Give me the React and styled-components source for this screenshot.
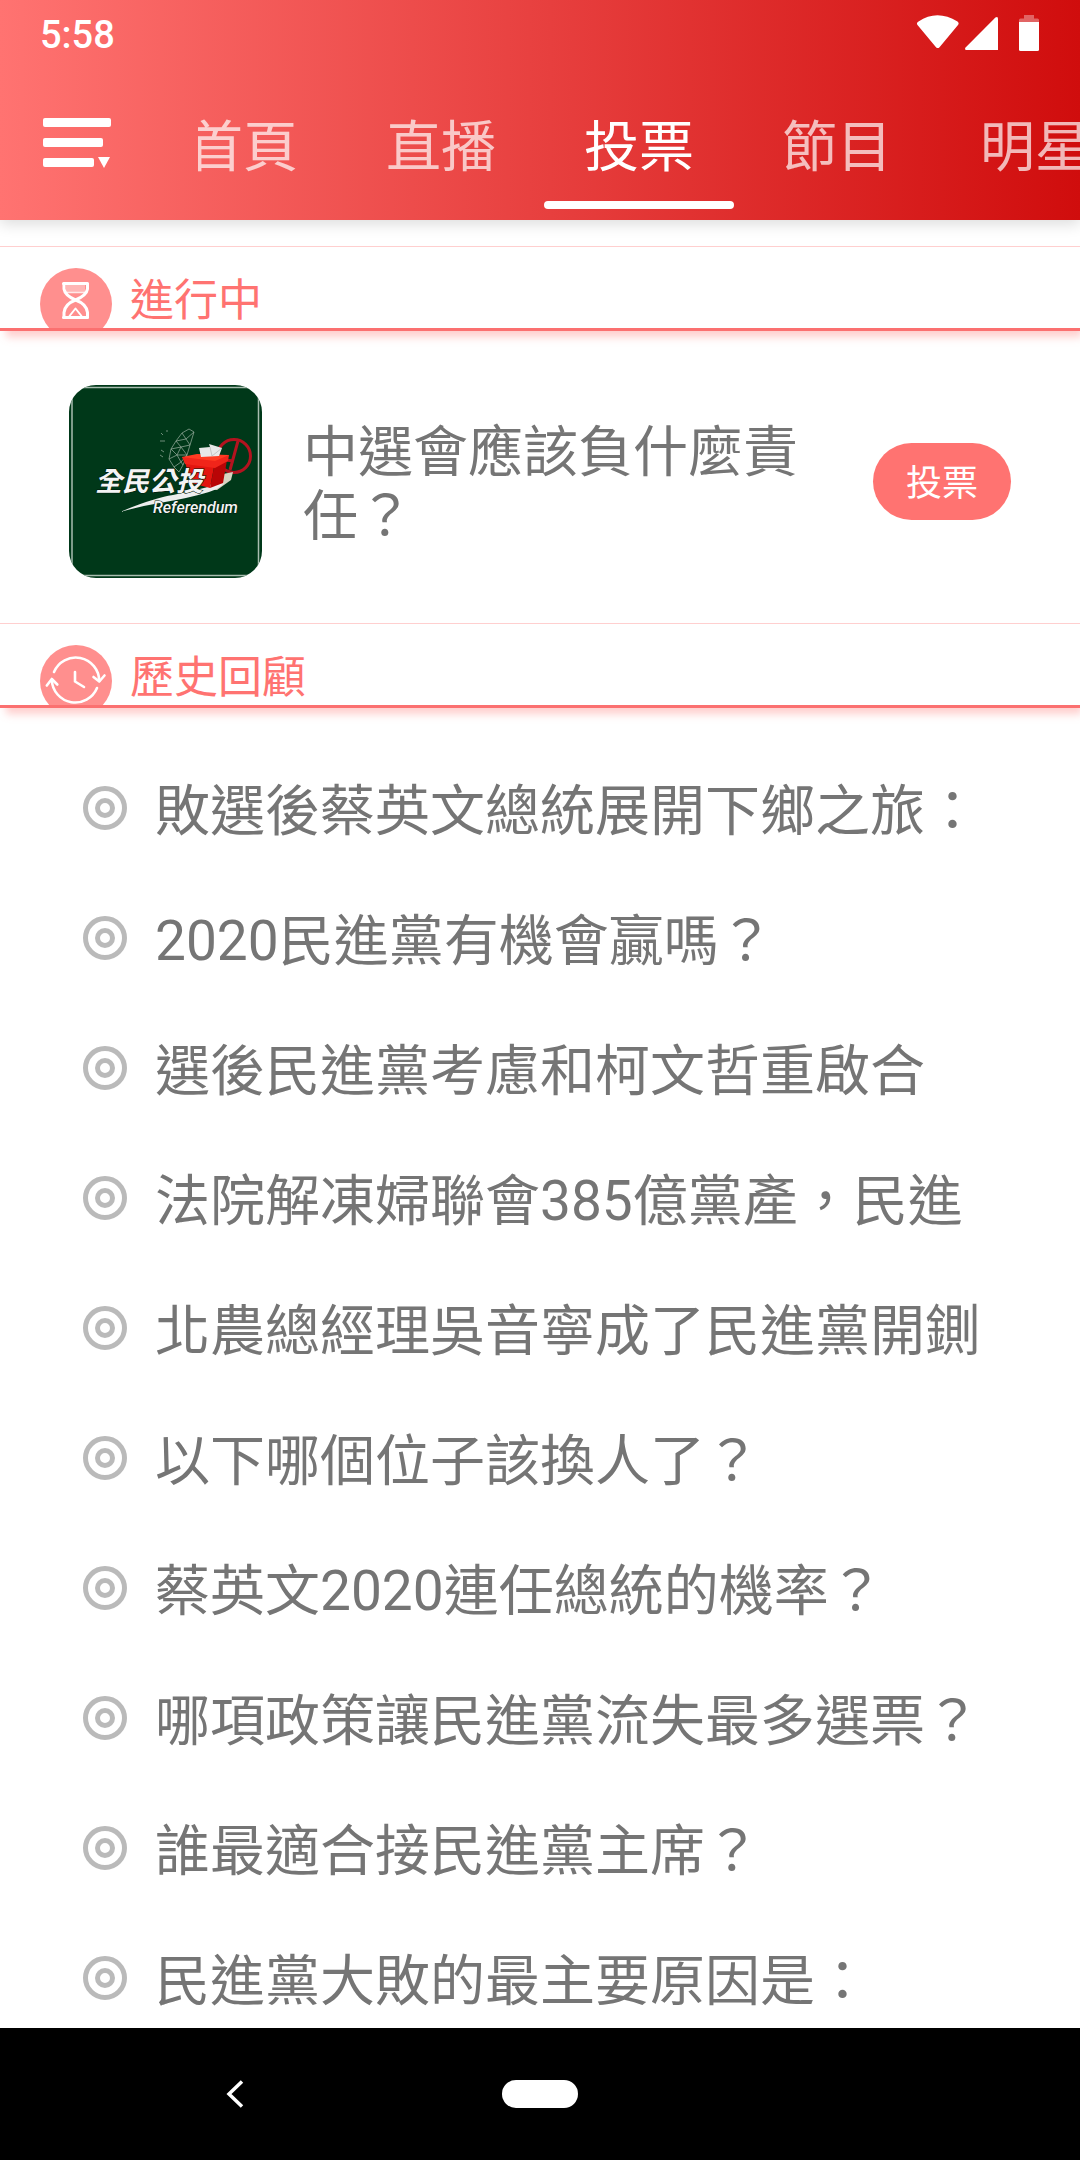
import { useState } from 'react'
import styled, { createGlobalStyle } from 'styled-components'

const GlobalStyle = createGlobalStyle`
  *, *::after {
    box-sizing: border-box;
  }
  body {
    margin: 0;
    background-color: white;
    font-family: Roboto, "Noto Sans CJK TC", sans-serif;
  }
`

const StPage = styled.div`
  display: flex;
  flex-direction: column;
  height: 100vh;
  overflow: hidden;
`

const StHeader = styled.header`
  flex: none;
  position: relative;
  background: linear-gradient(to right, #ff7371, #d00d0d);
  box-shadow: 0 4px 14px rgba(0, 0, 0, 0.14);
`

const StStatusBar = styled.div`
  display: flex;
  align-items: center;
  justify-content: space-between;
  height: 66px;
  padding: 0 41px 0 40px;
`

const StClock = styled.span`
  padding-top: 3px;
  color: white;
  font-size: 38px;
  font-weight: 500;
`

const StToolbar = styled.div`
  display: flex;
  height: 154px;
`

const StMenuButton = styled.button`
  flex: none;
  display: flex;
  align-items: center;
  width: 198px;
  padding: 0 0 0 43px;
  border: none;
  background: none;
  cursor: pointer;
`

const StTabs = styled.nav`
  flex: 1;
  display: flex;
  min-width: 0;
  overflow-x: auto;
  scrollbar-width: none;
`

const StTab = styled.button`
  flex: none;
  display: flex;
  flex-direction: column;
  align-items: center;
  justify-content: space-between;
  width: 198px;
  padding: 45px 4px 11px;
  border: none;
  background: none;
  color: ${(props) => (props.$active ? 'white' : 'rgba(255, 255, 255, 0.7)')};
  font-family: inherit;
  font-size: 55px;
  line-height: 72px;
  cursor: pointer;

  /* the strip rests slightly scrolled under the menu button */
  &:first-child {
    margin-left: -54px;
  }

  &::after {
    content: '';
    width: 100%;
    height: 8px;
    border-radius: 4px;
    background-color: ${(props) => (props.$active ? 'white' : 'transparent')};
  }
`

const StMain = styled.main`
  flex: 1;
  min-height: 0;
  padding-top: 26px;
  overflow: hidden;
`

const StSectionHead = styled.div`
  display: flex;
  align-items: flex-start;
  gap: 18px;
  height: 85px;
  padding: 21px 40px 0;
  overflow: hidden;
  border-top: 1px solid #ffcfcf;
  border-bottom: 3px solid #fb7070;
  box-shadow: 4px 8px 8px -2px rgba(255, 115, 113, 0.35);
`

const StSectionTitle = styled.h2`
  margin: 0;
  color: #ff7371;
  font-size: 44px;
  font-weight: 400;
  line-height: 66px;
`

const StVote = styled.div`
  display: flex;
  align-items: center;
  gap: 41px;
  padding: 54px 69px 45px;
`

const StThumb = styled.svg`
  flex: none;
  width: 193px;
  height: 193px;
  border-radius: 27px;
`

const StQuestion = styled.p`
  flex: 1;
  margin: 0;
  padding-top: 4px;
  color: #757575;
  font-size: 55px;
  line-height: 64px;
`

const StVoteButton = styled.button`
  flex: none;
  width: 138px;
  height: 77px;
  padding: 0 0 4px;
  border: none;
  border-radius: 39px;
  background-color: #ff7371;
  color: white;
  font-family: inherit;
  font-size: 36px;
  cursor: pointer;
`

const StList = styled.ul`
  margin: 0;
  padding: 35px 69px 0 83px;
  list-style: none;
`

const StItem = styled.a`
  display: flex;
  align-items: center;
  gap: 28px;
  height: 130px;
  color: #757575;
  text-decoration: none;
`

const StItemTitle = styled.span`
  padding-top: 6px;
  font-size: 55px;
  line-height: 72px;
  white-space: nowrap;
`

const StBullet = styled.span`
  flex: none;
  display: flex;
  align-items: center;
  justify-content: center;
  width: 44px;
  height: 44px;
  border: 5px solid #bababa;
  border-radius: 50%;

  &::after {
    content: '';
    width: 20px;
    height: 20px;
    border: 5px solid #bababa;
    border-radius: 50%;
  }
`

const StNavBar = styled.footer`
  flex: none;
  display: grid;
  grid-template-columns: 1fr 76px 1fr;
  align-items: center;
  height: 132px;
  background-color: black;
`

const StBackButton = styled.button`
  justify-self: center;
  display: flex;
  padding: 0 32px 0 0;
  border: none;
  background: none;
  cursor: pointer;
`

const StHomeButton = styled.button`
  height: 28px;
  padding: 0;
  border: none;
  border-radius: 14px;
  background-color: white;
  cursor: pointer;
`

const tabs = ['首頁', '直播', '投票', '節目', '明星']

const history = [
  '敗選後蔡英文總統展開下鄉之旅：',
  '2020民進黨有機會贏嗎？',
  '選後民進黨考慮和柯文哲重啟合',
  '法院解凍婦聯會385億黨產，民進',
  '北農總經理吳音寧成了民進黨開鍘',
  '以下哪個位子該換人了？',
  '蔡英文2020連任總統的機率？',
  '哪項政策讓民進黨流失最多選票？',
  '誰最適合接民進黨主席？',
  '民進黨大敗的最主要原因是：',
]

// wifi, signal, battery
function StatusIcons() {
  return (
    <svg width="122" height="38" viewBox="917 14 122 38" fill="white">
      <path d="M918.5 21.5Q937 9 957.5 21.5Q959.5 23 958 25L939.5 47.2Q937.8 49 936 47.2L917.5 25Q916 23 918.5 21.5Z" />
      <path d="M965.6 47.6L995.4 17.6Q998 16 998 18.8V50H966.5Q964 50 965.6 47.6Z" />
      <path d="M1024 15H1034V18.5H1037.5Q1039 18.5 1039 20V22H1019V20Q1019 18.5 1020.5 18.5H1024Z" opacity="0.35" />
      <path d="M1019 22H1039V49.5Q1039 51 1037.5 51H1020.5Q1019 51 1019 49.5Z" />
    </svg>
  )
}

function MenuIcon() {
  return (
    <svg width="68" height="50" viewBox="0 0 68 50" fill="white">
      <rect y="0" width="68" height="9" rx="2" />
      <rect y="20" width="60" height="9" rx="2" />
      <rect y="40" width="51" height="9" rx="2" />
      <path d="M55 39H67L61 50Z" />
    </svg>
  )
}

function HourglassIcon() {
  return (
    <svg width="72" height="72" viewBox="0 0 72 72" fill="none" stroke="white" strokeWidth="3" strokeLinejoin="round" strokeLinecap="round">
      <circle cx="36" cy="36" r="36" fill="#ff8f8e" stroke="none" />
      <path d="M26 17H45V24H26Z" fill="white" stroke="none" opacity="0.35" />
      <path d="M23.5 15.5H47.5" />
      <path d="M24 16V21Q25 27.5 35.5 32Q46.5 27.5 47.5 21V16" />
      <path d="M24 49V44.5Q25 36 35.5 32Q46.5 36 47.5 44.5V49" />
      <path d="M23.5 49.5H47.5" />
      <path d="M29.5 48L35.5 40.5L41.5 48" strokeWidth="2" />
      <path d="M27 24.5H44.5" strokeWidth="1.5" opacity="0.8" />
    </svg>
  )
}

function HistoryIcon() {
  return (
    <svg width="72" height="72" viewBox="0 0 72 72" fill="none" stroke="white" strokeWidth="2.6" strokeLinejoin="round" strokeLinecap="round">
      <circle cx="36" cy="36" r="36" fill="#ff8f8e" stroke="none" />
      <path d="M14 27A23.5 23.5 0 0 1 59.2 36" />
      <path d="M53.5 32L59.3 36.5L64.5 30.5" />
      <path d="M57 43A23.5 23.5 0 0 1 11.8 35" />
      <path d="M6.8 40.5L11.8 34L17.3 39.5" />
      <path d="M35 27V36.5L44 42" />
    </svg>
  )
}

function ReferendumThumb() {
  return (
    <StThumb viewBox="0 0 193 193" role="img" aria-label="全民公投 Referendum">
      <rect width="193" height="193" fill="#003819" />
      <path d="M3 0V193M189.5 0V193M0 2.5H193M0 190.5H193" stroke="#a9bdb0" strokeWidth="1.5" />
      {/* Taiwan outline */}
      <g fill="none" stroke="#8ba393" strokeWidth="0.8">
        <path d="M125 47L120 44L113 48L107 56L102 64L100 74L105 82L110 87L114 80L118 70L121 60Z" />
        <path d="M113 48L117 54L125 47M117 54L121 60L112 62L107 56L117 54M112 62L102 64L108 70L112 62L118 70L108 70L100 74M108 70L112 77L118 70M112 77L105 82M112 77L114 80" />
        <path d="M92 48L94 50M91 56H96M92 65L95 67M91 70L94 72M97 46H99" />
      </g>
      {/* vote stamp */}
      <circle cx="165" cy="71" r="16.5" fill="none" stroke="#b3131f" strokeWidth="3" />
      <path d="M169 56L161 85M156 75L165 76" fill="none" stroke="#b3131f" strokeWidth="3" />
      {/* brush stroke */}
      <path d="M154 89L164 87L162 95L148 105L136 104Z" fill="#d8d4c2" />
      <path d="M51 127Q84 113 104 110Q132 104 155 98Q150 104 140 107Q120 113 96 117Q72 121 51 127Z" fill="#eeeeee" />
      {/* ballot box */}
      <path d="M113 72L128 69L160 70L154 81L120 81Z" fill="#ff3b22" />
      <path d="M116 77L145 82L141 103L122 98Z" fill="#e3150f" />
      <path d="M145 82L158 75L154 98L141 103Z" fill="#b90506" />
      <path d="M113 72L146 76L160 70L159 76L146 83L116 79Z" fill="#f0251a" />
      <path d="M130 63L141 62L140 59L153 63L150 71L132 72Z" fill="#e8e8e8" />
      <path d="M141 62L143 71M153 63L143 71" stroke="#b5b5b5" strokeWidth="0.7" />
      <g fill="#f4f4f4" stroke="#00170a" strokeWidth="1" paintOrder="stroke">
        <text x="26" y="106" fontSize="27" fontWeight="700" fontStyle="italic">全民公投</text>
        <text x="84" y="128" fontSize="16" fontWeight="500" fontStyle="italic">Referendum</text>
      </g>
    </StThumb>
  )
}

function App() {
  const [active, setActive] = useState('投票')

  return (
    <>
      <GlobalStyle />
      <StPage>
        <StHeader>
          <StStatusBar>
            <StClock>5:58</StClock>
            <StatusIcons />
          </StStatusBar>
          <StToolbar>
            <StMenuButton aria-label="選單">
              <MenuIcon />
            </StMenuButton>
            <StTabs>
              {tabs.map((tab) => (
                <StTab key={tab} $active={tab === active} onClick={() => setActive(tab)}>
                  {tab}
                </StTab>
              ))}
            </StTabs>
          </StToolbar>
        </StHeader>

        <StMain>
          <StSectionHead>
            <HourglassIcon />
            <StSectionTitle>進行中</StSectionTitle>
          </StSectionHead>
          <StVote>
            <ReferendumThumb />
            <StQuestion>中選會應該負什麼責任？</StQuestion>
            <StVoteButton>投票</StVoteButton>
          </StVote>

          <StSectionHead>
            <HistoryIcon />
            <StSectionTitle>歷史回顧</StSectionTitle>
          </StSectionHead>
          <StList>
            {history.map((title) => (
              <li key={title}>
                <StItem href="#">
                  <StBullet />
                  <StItemTitle>{title}</StItemTitle>
                </StItem>
              </li>
            ))}
          </StList>
        </StMain>

        <StNavBar>
          <StBackButton aria-label="返回">
            <svg width="18" height="28" viewBox="0 0 18 28" fill="none" stroke="white" strokeWidth="3.5">
              <path d="M16 1.5L3 14L16 26.5" />
            </svg>
          </StBackButton>
          <StHomeButton aria-label="主畫面" />
        </StNavBar>
      </StPage>
    </>
  )
}

export default App
